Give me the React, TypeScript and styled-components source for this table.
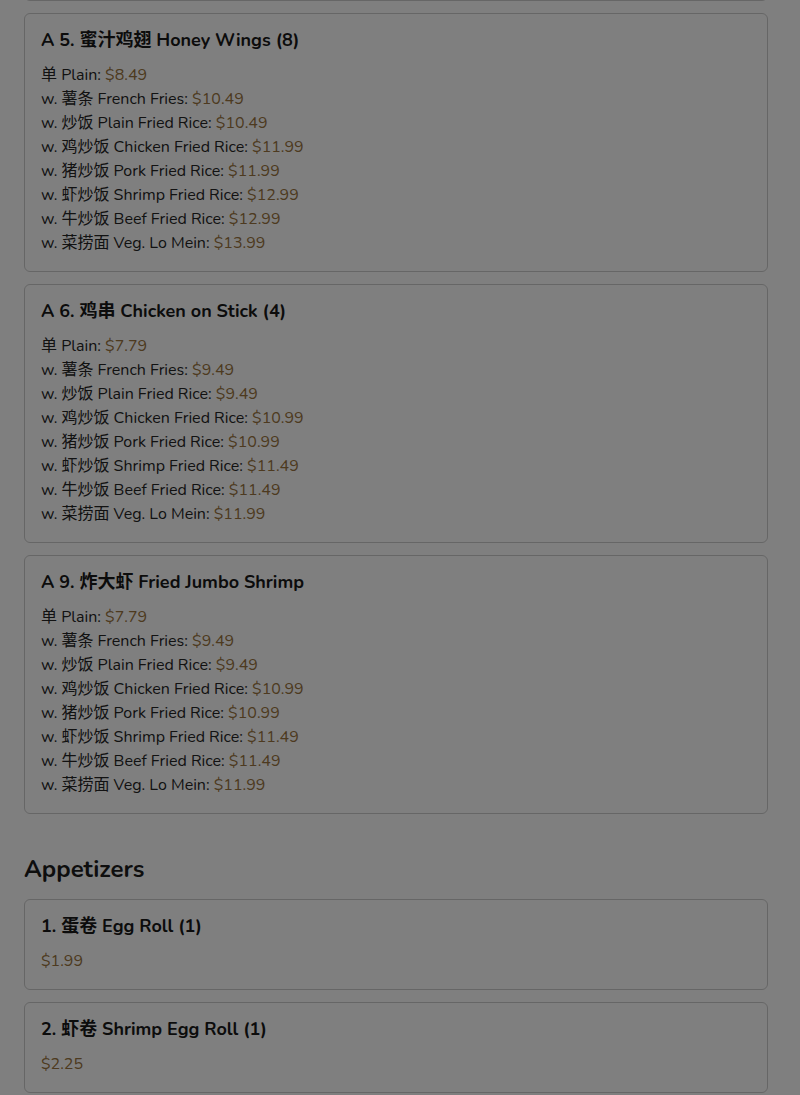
import { useLayoutEffect, useRef } from "react";
import styled, { createGlobalStyle } from "styled-components";

type Item = {
  label: string;
  price: string;
};
type Dish = {
  id: string;
  title: string;
  items: Item[];
};
type Section = {
  name?: string;
  dishes: Dish[];
};

const GlobalStyle = createGlobalStyle`
  html, body {
    margin: 0;
    padding: 0;
    background: #ffffff;
  }
  body {
    font-family: "Nunito", "Lato", "Noto Sans CJK SC", sans-serif;
    color: #1c1c1c;
  }
`;

const Page = styled.div`
  padding: 0 32px 40px 24px;
`;

const SectionBlock = styled.section`
  display: flex;
  flex-direction: column;
`;

const SectionTitle = styled.h2`
  font-size: 24px;
  font-weight: 700;
  margin: 28px 0 15px;
  line-height: 30px;
  color: #1c1c1c;
`;

const Card = styled.div`
  border: 1px solid #cccccc;
  border-radius: 6px;
  padding: 15px 16px 16px;
  margin-bottom: 12px;
  background: #fff;
`;

const DishTitle = styled.h3`
  font-size: 18px;
  font-weight: 700;
  line-height: 22px;
  margin: 0 0 12px;
  color: #181818;
`;

const Line = styled.div`
  font-size: 16px;
  line-height: 24px;
  color: #252525;
`;

const Price = styled.span`
  color: #9a7440;
`;

const Backdrop = styled.div`
  position: fixed;
  inset: 0;
  background: rgba(0, 0, 0, 0.5);
`;

const combo = (p: string[]): Item[] => [
  { label: "单 Plain", price: p[0] },
  { label: "w. 薯条 French Fries", price: p[1] },
  { label: "w. 炒饭 Plain Fried Rice", price: p[2] },
  { label: "w. 鸡炒饭 Chicken Fried Rice", price: p[3] },
  { label: "w. 猪炒饭 Pork Fried Rice", price: p[4] },
  { label: "w. 虾炒饭 Shrimp Fried Rice", price: p[5] },
  { label: "w. 牛炒饭 Beef Fried Rice", price: p[6] },
  { label: "w. 菜捞面 Veg. Lo Mein", price: p[7] },
];

const single = (price: string): Item[] => [{ label: "", price }];

const sections: Section[] = [
  {
    dishes: [
      {
        id: "a4",
        title: "A 4. 炸鸡翅 Fried Chicken Wings (4)",
        items: combo(["$7.49", "$9.19", "$9.19", "$10.49", "$10.49", "$11.49", "$11.49", "$11.99"]),
      },
      {
        id: "a5",
        title: "A 5. 蜜汁鸡翅 Honey Wings (8)",
        items: combo(["$8.49", "$10.49", "$10.49", "$11.99", "$11.99", "$12.99", "$12.99", "$13.99"]),
      },
      {
        id: "a6",
        title: "A 6. 鸡串 Chicken on Stick (4)",
        items: combo(["$7.79", "$9.49", "$9.49", "$10.99", "$10.99", "$11.49", "$11.49", "$11.99"]),
      },
      {
        id: "a9",
        title: "A 9. 炸大虾 Fried Jumbo Shrimp",
        items: combo(["$7.79", "$9.49", "$9.49", "$10.99", "$10.99", "$11.49", "$11.49", "$11.99"]),
      },
    ],
  },
  {
    name: "Appetizers",
    dishes: [
      { id: "p1", title: "1. 蛋卷 Egg Roll (1)", items: single("$1.99") },
      { id: "p2", title: "2. 虾卷 Shrimp Egg Roll (1)", items: single("$2.25") },
      { id: "p3", title: "3. 春卷 Spring Roll (2)", items: single("$2.79") },
      { id: "p4", title: "4. 蟹角 Crab Rangoon (8)", items: single("$6.49") },
    ],
  },
];

const App = () => {
  const anchor = useRef<HTMLDivElement>(null);

  useLayoutEffect(() => {
    // the shot is taken scrolled down to the A 5 card
    if (anchor.current) {
      window.scrollTo(0, anchor.current.offsetTop - 13);
    }
  }, []);

  return (
    <>
      <GlobalStyle />
      <Page>
        {sections.map((section, i) => (
          <SectionBlock key={i}>
            {section.name && <SectionTitle>{section.name}</SectionTitle>}
            {section.dishes.map((dish) => (
              <Card key={dish.id} ref={dish.id === "a5" ? anchor : undefined}>
                <DishTitle>{dish.title}</DishTitle>
                {dish.items.map((item, j) => (
                  <Line key={j}>
                    {item.label && `${item.label}: `}
                    <Price>{item.price}</Price>
                  </Line>
                ))}
              </Card>
            ))}
          </SectionBlock>
        ))}
      </Page>
      <Backdrop />
    </>
  );
};

export default App;
